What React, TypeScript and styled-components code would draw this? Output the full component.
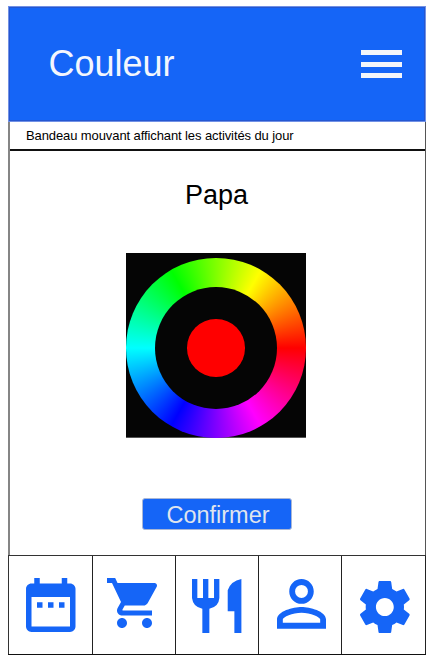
import React from "react";
import styled, { createGlobalStyle } from "styled-components";

const BLUE = "#1565f7";

const GlobalStyle = createGlobalStyle`
  * { box-sizing: border-box; }
  body {
    margin: 0;
    background: #fff;
    font-family: "Liberation Sans", Arial, sans-serif;
  }
`;

const Phone = styled.div`
  width: 418px;
  height: 649px;
  margin: 6px 0 0 8px;
  display: flex;
  flex-direction: column;
`;

const Header = styled.header`
  height: 116px;
  flex: none;
  display: flex;
  justify-content: space-between;
  align-items: flex-start;
  padding: 0 23px 0 39.5px;
  background: ${BLUE};
  border: 1px solid #7191e6;
  box-shadow: inset 0 0 0 1px #2557d0;
`;

const Title = styled.h1`
  margin: 36px 0 0;
  font-size: 36px;
  line-height: 42px;
  font-weight: 400;
  color: #f3f6fd;
`;

const MenuButton = styled.button`
  margin: 43px 0 0;
  padding: 0;
  border: 0;
  width: 41px;
  height: 28px;
  background: none;
  display: flex;
  flex-direction: column;
  justify-content: space-between;
`;

const MenuBar = styled.span`
  height: 5px;
  background: #f3f5fa;
`;

const Body = styled.div`
  flex: 1;
  display: flex;
  flex-direction: column;
  border-left: 2px solid #858585;
  border-right: 1px solid #555;
`;

const Banner = styled.div`
  height: 29px;
  flex: none;
  padding: 0 0 0 16px;
  border-bottom: 2px solid #111;
  font-size: 13px;
  line-height: 27px;
  letter-spacing: -0.1px;
  color: #000;
  white-space: nowrap;
`;

const Main = styled.main`
  flex: 1;
  display: flex;
  flex-direction: column;
  align-items: center;
  padding-right: 3px;
`;

const Name = styled.h2`
  margin: 29px 0 0;
  padding-left: 1px;
  font-size: 27px;
  line-height: 31px;
  font-weight: 400;
  color: #000;
`;

const Picker = styled.div`
  width: 180px;
  height: 185px;
  margin-top: 42px;
  padding-top: 5px;
  background: #050505;
  border-bottom: 1px solid #555;
`;

const Wheel = styled.div`
  width: 179.5px;
  height: 179.5px;
  border-radius: 50%;
  display: grid;
  place-items: center;
  background: conic-gradient(from 90deg, #f00, #f0f, #00f, #0ff, #0f0, #ff0, #f00);
`;

const Hole = styled.div`
  width: 122px;
  height: 122px;
  border-radius: 50%;
  display: grid;
  place-items: center;
  background: #050505;
`;

const Swatch = styled.div`
  width: 57.5px;
  height: 57.5px;
  border-radius: 50%;
  background: #f00;
`;

const Confirm = styled.button`
  width: 150px;
  height: 32px;
  margin: 60px 0 0 1px;
  padding: 2px 0 0 3px;
  border: 1px solid #a9b7d6;
  border-radius: 3px;
  background: ${BLUE};
  color: #dfe4ee;
  font: 400 23.5px/28px "Liberation Sans", Arial, sans-serif;
`;

const Nav = styled.nav`
  height: 100px;
  flex: none;
  display: grid;
  grid-template-columns: 85px 83px 83px 83px 84px;
  border-top: 1px solid #333;
  border-bottom: 1px solid #111;
`;

const Tab = styled.a`
  border-right: 1px solid #222;
  &:first-child { border-left: 1px solid #333; }
`;

const Icon = styled.svg<{ $x: number; $y: number; $w: number; $h: number }>`
  display: block;
  width: ${(p) => p.$w}px;
  height: ${(p) => p.$h}px;
  margin: ${(p) => p.$y}px 0 0 ${(p) => p.$x}px;
  fill: ${BLUE};
`;

const tabs = [
  {
    label: "Calendrier",
    box: "3 2 18 20",
    x: 17.3, y: 22, w: 49.5, h: 54,
    d: "M9 11H7v2h2v-2zm4 0h-2v2h2v-2zm4 0h-2v2h2v-2zm2-7h-1V2h-2v2H8V2H6v2H5c-1.11 0-1.99.9-1.99 2L3 20c0 1.1.89 2 2 2h14c1.1 0 2-.9 2-2V6c0-1.1-.9-2-2-2zm0 16H5V9h14v11z",
  },
  {
    label: "Courses",
    box: "1 2 20 20",
    x: 14, y: 22.3, w: 50, h: 50,
    d: "M7 18c-1.1 0-1.99.9-1.99 2S5.9 22 7 22s2-.9 2-2-.9-2-2-2zM1 2v2h2l3.6 7.59-1.35 2.45c-.16.28-.25.61-.25.96 0 1.1.9 2 2 2h12v-2H7.42c-.14 0-.25-.11-.25-.25l.03-.12.9-1.63h7.45c.75 0 1.41-.41 1.75-1.03l3.58-6.49c.08-.14.12-.31.12-.48 0-.55-.45-1-1-1H5.21l-.94-2H1zm16 16c-1.1 0-1.99.9-1.99 2s.89 2 1.99 2 2-.9 2-2-.9-2-2-2z",
  },
  {
    label: "Repas",
    box: "0 0 148 162",
    x: 16.3, y: 23.3, w: 49.4, h: 54,
    d: "M0 0h16v57h17V0h16v57h17V0h16v57q-2 27-30 32v73H31V89Q3 84 0 57zM148 0v162h-21V97h-20V34Q116 6 148 0z",
  },
  {
    label: "Profil",
    box: "4 4 16 16",
    x: 18, y: 23.3, w: 49, h: 49.7,
    d: "M12 5.9a2.1 2.1 0 1 1 0 4.2 2.1 2.1 0 0 1 0-4.2m0 9c2.97 0 6.1 1.46 6.1 2.1v1.1H5.9V17c0-.64 3.13-2.1 6.1-2.1M12 4C9.79 4 8 5.79 8 8s1.79 4 4 4 4-1.79 4-4-1.79-4-4-4zm0 9c-2.67 0-8 1.34-8 4v3h16v-3c0-2.66-5.33-4-8-4z",
  },
  {
    label: "Paramètres",
    box: "2.27 2 19.46 20",
    x: 18, y: 25, w: 49.7, h: 52,
    d: "M19.43 12.98c.04-.32.07-.64.07-.98s-.03-.66-.07-.98l2.11-1.65c.19-.15.24-.42.12-.64l-2-3.46c-.12-.22-.39-.3-.61-.22l-2.49 1c-.52-.4-1.08-.73-1.69-.98l-.38-2.65C14.46 2.18 14.25 2 14 2h-4c-.25 0-.46.18-.49.42l-.38 2.65c-.61.25-1.17.59-1.69.98l-2.49-1c-.23-.09-.49 0-.61.22l-2 3.46c-.13.22-.07.49.12.64l2.11 1.65c-.04.32-.07.65-.07.98s.03.66.07.98l-2.11 1.65c-.19.15-.24.42-.12.64l2 3.46c.12.22.39.3.61.22l2.49-1c.52.4 1.08.73 1.69.98l.38 2.65c.03.24.24.42.49.42h4c.25 0 .46-.18.49-.42l.38-2.65c.61-.25 1.17-.59 1.69-.98l2.49 1c.23.09.49 0 .61-.22l2-3.46c.12-.22.07-.49-.12-.64l-2.11-1.65zM12 15.5c-1.93 0-3.5-1.57-3.5-3.5s1.57-3.5 3.5-3.5 3.5 1.57 3.5 3.5-1.57 3.5-3.5 3.5z",
  },
];

export default function App() {
  return (
    <>
      <GlobalStyle />
      <Phone>
        <Header>
          <Title>Couleur</Title>
          <MenuButton>
            <MenuBar />
            <MenuBar />
            <MenuBar />
          </MenuButton>
        </Header>
        <Body>
          <Banner>Bandeau mouvant affichant les activités du jour</Banner>
          <Main>
            <Name>Papa</Name>
            <Picker>
              <Wheel>
                <Hole>
                  <Swatch />
                </Hole>
              </Wheel>
            </Picker>
            <Confirm>Confirmer</Confirm>
          </Main>
        </Body>
        <Nav>
          {tabs.map((t) => (
            <Tab key={t.label}>
              <Icon viewBox={t.box} preserveAspectRatio="none" $x={t.x} $y={t.y} $w={t.w} $h={t.h}>
                <path d={t.d} />
              </Icon>
            </Tab>
          ))}
        </Nav>
      </Phone>
    </>
  );
}
